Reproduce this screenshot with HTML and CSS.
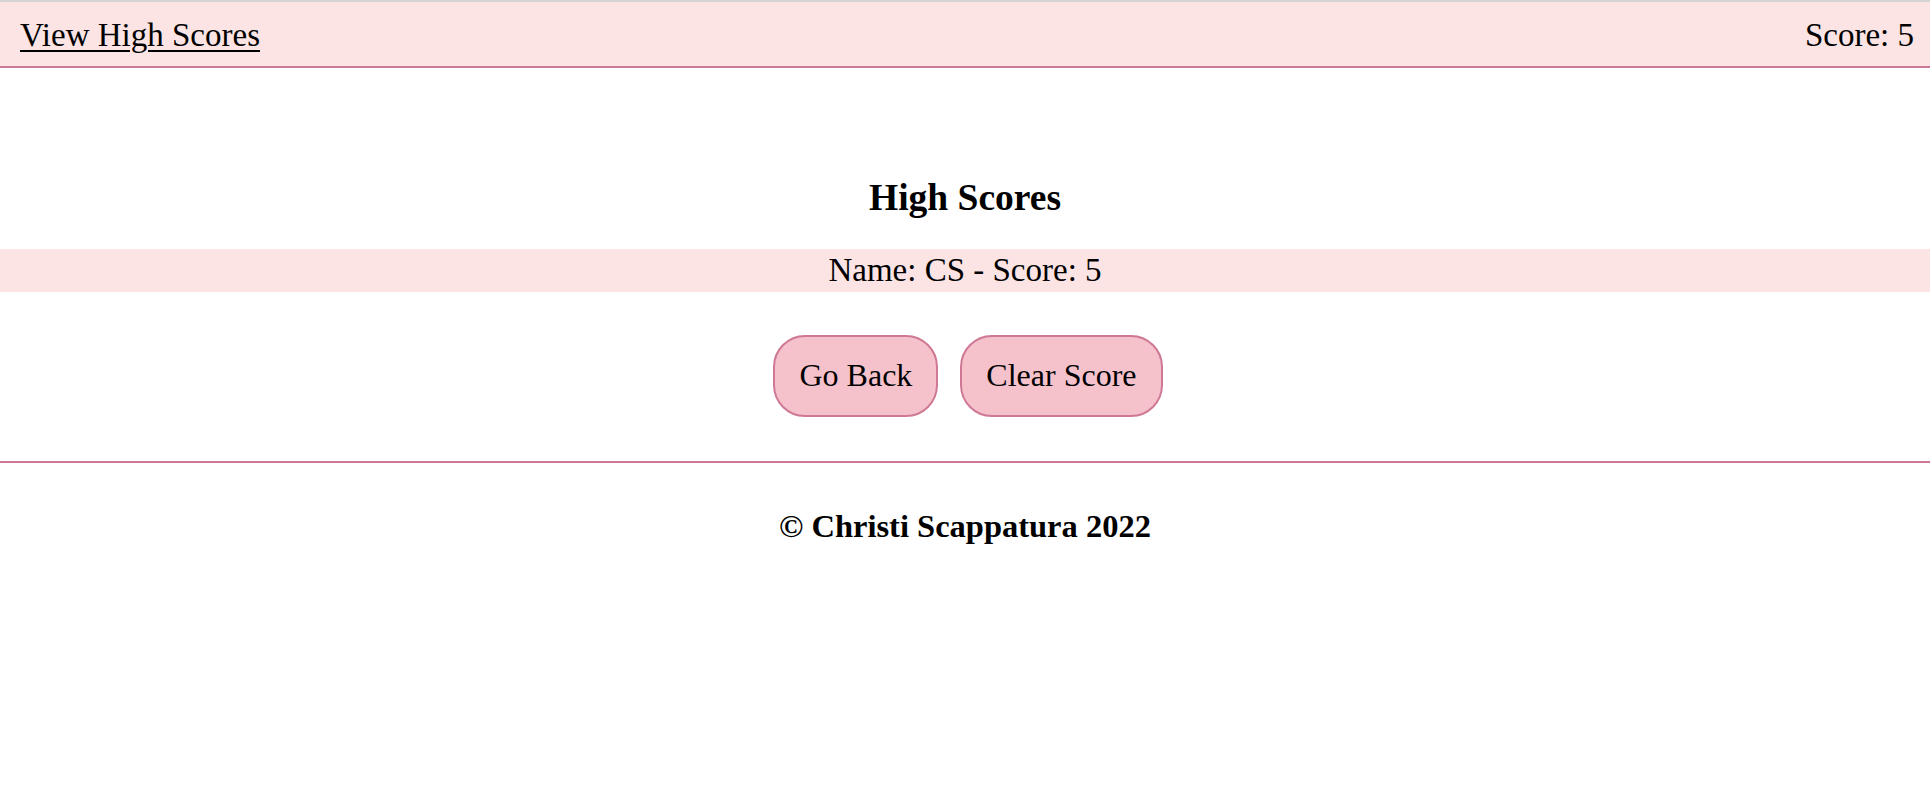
FILE: index.html
```html
<!DOCTYPE html>
<html lang="en">
<head>
<meta charset="utf-8">
<title>High Scores</title>
<link rel="stylesheet" href="styles.css">
</head>
<body>
<header class="topbar">
  <a class="view-link" href="#">View High Scores</a>
  <span class="score">Score: 5</span>
</header>
<main class="content">
  <h2 class="title">High Scores</h2>
  <ul class="score-list">
    <li class="score-item">Name: CS - Score: 5</li>
  </ul>
  <div class="actions">
    <button class="btn" type="button">Go Back</button>
    <button class="btn" type="button">Clear Score</button>
  </div>
</main>
<footer class="footer">
  <p class="copy">© Christi Scappatura 2022</p>
</footer>
</body>
</html>
```

FILE: styles.css
```css
html, body {
  margin: 0;
  padding: 0;
  background: #ffffff;
}

body {
  font-family: "Liberation Serif", "Times New Roman", serif;
  color: #000000;
}

.topbar {
  display: flex;
  justify-content: space-between;
  align-items: center;
  background: #fbe4e3;
  border-top: 2px solid #d3d3d3;
  border-bottom: 2px solid #cf7895;
  padding: 15px 16px 12px 20px;
  font-size: 33px;
  line-height: 37px;
}

.view-link {
  color: #000000;
  text-decoration: underline;
  text-decoration-thickness: 2px;
  text-underline-offset: 4px;
}

.score {
  color: #000000;
}

.content {
  display: flex;
  flex-direction: column;
  align-items: stretch;
  padding: 109px 0 44px;
}

.title {
  margin: 0 0 31px;
  text-align: center;
  font-size: 37.5px;
  line-height: 41px;
  font-weight: bold;
}

.score-list {
  list-style: none;
  margin: 0 0 43px;
  padding: 0;
}

.score-item {
  background: #fbe4e3;
  text-align: center;
  font-size: 33px;
  line-height: 41px;
  padding: 1px 0;
}

.actions {
  display: flex;
  justify-content: center;
  gap: 22px;
  padding-left: 6px;
}

.btn {
  font-family: "Liberation Serif", "Times New Roman", serif;
  font-size: 32px;
  line-height: 37px;
  color: #000000;
  background: #f5c2cc;
  border: 2px solid #cf7895;
  border-radius: 32px;
  padding: 20px 24px 21px;
  cursor: pointer;
}

.footer {
  border-top: 2px solid #cf7895;
  padding-top: 45px;
}

.copy {
  margin: 0;
  text-align: center;
  font-size: 32.5px;
  line-height: 36px;
  font-weight: bold;
}
```
